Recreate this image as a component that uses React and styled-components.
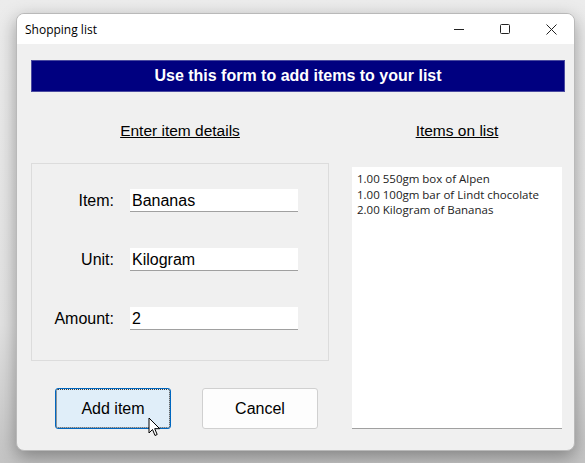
import React from "react";
import styled, { createGlobalStyle } from "styled-components";

const GlobalStyle = createGlobalStyle`
  html, body {
    margin: 0;
    padding: 0;
    width: 585px;
    height: 463px;
    overflow: hidden;
    background: linear-gradient(#ececec, #e2e2e2 70%, #c4c4c4);
  }
  #root {
    padding: 13px 0 0 16px;
  }
`;

const items = [
  "1.00 550gm box of Alpen",
  "1.00 100gm bar of Lindt chocolate",
  "2.00 Kilogram of Bananas",
];

const fields = [
  { label: "Item:", value: "Bananas" },
  { label: "Unit:", value: "Kilogram" },
  { label: "Amount:", value: "2" },
];

function App() {
  return (
    <>
      <GlobalStyle />
      <Window>
        <TitleBar>
          <Title>Shopping list</Title>
          <Caption>
            <CaptionButton>
              <svg width="10" height="10" viewBox="0 0 10 10">
                <path d="M0 5.5h10" stroke="#222" strokeWidth="1" />
              </svg>
            </CaptionButton>
            <CaptionButton>
              <svg width="10" height="10" viewBox="0 0 10 10">
                <rect x="0.5" y="0.5" width="9" height="9" rx="1" fill="none" stroke="#222" strokeWidth="1" />
              </svg>
            </CaptionButton>
            <CaptionButton>
              <svg width="11" height="11" viewBox="0 0 11 11">
                <path d="M0.5 0.5l10 10M10.5 0.5l-10 10" stroke="#222" strokeWidth="1" />
              </svg>
            </CaptionButton>
          </Caption>
        </TitleBar>
        <Body>
          <Banner>Use this form to add items to your list</Banner>
          <Columns>
            <LeftColumn>
              <Heading>Enter item details</Heading>
              <GroupBox>
                {fields.map((f) => (
                  <FieldRow key={f.label}>
                    <Label>{f.label}</Label>
                    <TextBox>{f.value}</TextBox>
                  </FieldRow>
                ))}
              </GroupBox>
              <Buttons>
                <Button $primary>
                  Add item
                  <Cursor width="14" height="20" viewBox="0 0 14 20">
                    <path
                      d="M1 1v15l3.5-3.5 2.5 6 2.2-1-2.5-5.8h5z"
                      fill="#fff"
                      stroke="#000"
                      strokeWidth="1"
                      strokeLinejoin="round"
                    />
                  </Cursor>
                </Button>
                <Button>Cancel</Button>
              </Buttons>
            </LeftColumn>
            <RightColumn>
              <Heading>Items on list</Heading>
              <ListBox>
                {items.map((t) => (
                  <ListItem key={t}>{t}</ListItem>
                ))}
              </ListBox>
            </RightColumn>
          </Columns>
        </Body>
      </Window>
    </>
  );
}

export default App;

const Window = styled.div`
  width: 559px;
  height: 438px;
  border-radius: 8px;
  background: #f0f0f0;
  border: 1px solid #b9b9b9;
  box-sizing: border-box;
  box-shadow: 0 6px 18px rgba(0, 0, 0, 0.35);
  overflow: hidden;
  display: flex;
  flex-direction: column;
`;

const TitleBar = styled.div`
  height: 30px;
  background: #fff;
  display: flex;
  align-items: center;
  justify-content: space-between;
  padding-left: 8px;
`;

const Title = styled.div`
  font-family: "Open Sans", "Noto Sans", sans-serif;
  font-size: 12px;
  color: #000;
`;

const Caption = styled.div`
  display: flex;
  height: 100%;
`;

const CaptionButton = styled.div`
  width: 46px;
  height: 100%;
  display: flex;
  align-items: center;
  justify-content: center;
`;

const Body = styled.div`
  flex: 1;
  padding: 16px 9px 0 14px;
  font-family: "Liberation Sans", Arial, sans-serif;
`;

const Banner = styled.div`
  height: 32px;
  background: #000080;
  color: #fff;
  font-weight: bold;
  font-size: 16px;
  display: flex;
  align-items: center;
  justify-content: center;
  border: 1px solid #4a4aa0;
  box-sizing: border-box;
`;

const Columns = styled.div`
  display: flex;
  margin-top: 29px;
`;

const LeftColumn = styled.div`
  width: 298px;
  display: flex;
  flex-direction: column;
`;

const RightColumn = styled.div`
  margin-left: 23px;
  width: 210px;
  display: flex;
  flex-direction: column;
`;

const Heading = styled.div`
  font-size: 15.5px;
  text-decoration: underline;
  color: #000;
  text-align: center;
  height: 20px;
  line-height: 20px;
`;

const GroupBox = styled.div`
  margin-top: 22px;
  height: 198px;
  border: 1px solid #dcdcdc;
  box-sizing: border-box;
  padding-top: 25px;
  display: flex;
  flex-direction: column;
  gap: 36px;
`;

const FieldRow = styled.div`
  display: flex;
  align-items: center;
  height: 23px;
`;

const Label = styled.div`
  width: 82px;
  text-align: right;
  font-size: 16px;
  color: #000;
`;

const TextBox = styled.div`
  margin-left: 16px;
  width: 168px;
  height: 23px;
  box-sizing: border-box;
  background: #fff;
  border-bottom: 1px solid #a0a0a0;
  font-size: 16px;
  padding: 3px 0 0 2px;
  color: #000;
`;

const Buttons = styled.div`
  display: flex;
  gap: 31px;
  margin-top: 27px;
  padding-left: 24px;
`;

const Button = styled.div`
  position: relative;
  width: 116px;
  height: 41px;
  box-sizing: border-box;
  border-radius: 3px;
  display: flex;
  align-items: center;
  justify-content: center;
  font-size: 16px;
  color: #000;
  background: ${(p) => (p.$primary ? "#e0eef9" : "#fdfdfd")};
  border: 1px solid ${(p) => (p.$primary ? "#0067c0" : "#d0d0d0")};
  outline: ${(p) => (p.$primary ? "1px dotted #3a3a3a" : "none")};
  outline-offset: -2px;
`;

const Cursor = styled.svg`
  position: absolute;
  left: 92px;
  top: 28px;
`;

const ListBox = styled.div`
  margin-top: 26px;
  height: 262px;
  background: #fff;
  border-bottom: 1px solid #a0a0a0;
  box-sizing: border-box;
  padding: 4px 5px;
`;

const ListItem = styled.div`
  font-family: "Open Sans", "Noto Sans", sans-serif;
  font-size: 11.5px;
  line-height: 15.5px;
  color: #222;
`;
